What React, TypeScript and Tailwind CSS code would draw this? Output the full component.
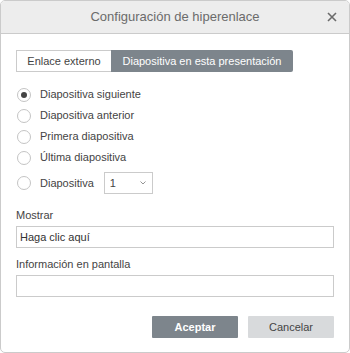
import React from "react";

const options = [
  "Diapositiva siguiente",
  "Diapositiva anterior",
  "Primera diapositiva",
  "Última diapositiva",
];

const Radio = ({ checked }: { checked?: boolean }) => (
  <span className="w-[14px] h-[14px] rounded-full border border-[#c4c4c4] bg-white flex items-center justify-center shrink-0">
    {checked && <span className="w-[6px] h-[6px] rounded-full bg-[#444]" />}
  </span>
);

const App = () => {
  return (
    <div
      className="w-[350px] h-[353px] bg-white border border-[#cbcbcb] rounded-[5px] overflow-hidden flex flex-col text-[11px] text-[#444]"
      style={{ fontFamily: '"Liberation Sans", Arial, sans-serif' }}
    >
      {/* Header */}
      <div className="h-[33px] shrink-0 bg-[#ededed] border-b border-[#cbcbcb] relative flex items-center justify-center">
        <span className="text-[13px] text-[#6b6b6b]">Configuración de hiperenlace</span>
        <svg className="absolute right-[12px] top-[11px]" width="10" height="10" viewBox="0 0 10 10">
          <path d="M1 1L9 9M9 1L1 9" stroke="#6b6b6b" strokeWidth="1.6" />
        </svg>
      </div>

      <div className="px-[15px] pt-[16px] flex flex-col">
        {/* Tabs */}
        <div className="flex h-[22px]">
          <div className="w-[95px] border border-[#cbcbcb] border-r-0 flex items-center justify-center text-[#444]">
            Enlace externo
          </div>
          <div className="w-[182px] bg-[#7d858c] rounded-r-[2px] flex items-center justify-center text-white">
            Diapositiva en esta presentación
          </div>
        </div>

        {/* Radios */}
        <div className="flex flex-col mt-[12px] pl-[1px]">
          {options.map((o, i) => (
            <div key={o} className="flex items-center h-[21px] gap-[9px]">
              <Radio checked={i === 0} />
              <span>{o}</span>
            </div>
          ))}
          <div className="flex items-center h-[22px] gap-[9px] mt-[4px]">
            <Radio />
            <span>Diapositiva</span>
            <div className="ml-[1px] w-[49px] h-[22px] border border-[#cbcbcb] flex items-center justify-between pl-[5px] pr-[6px]">
              <span>1</span>
              <svg width="6" height="4" viewBox="0 0 6 4">
                <path d="M0.5 0.5L3 3L5.5 0.5" stroke="#777" strokeWidth="0.8" fill="none" />
              </svg>
            </div>
          </div>
        </div>

        {/* Fields */}
        <div className="mt-[14px] flex flex-col">
          <span className="leading-[14px]">Mostrar</span>
          <div className="mt-[4px] h-[22px] border border-[#cbcbcb] flex items-center px-[3px] text-[#333]">
            Haga clic aquí
          </div>
          <span className="mt-[9px] leading-[14px]">Información en pantalla</span>
          <div className="mt-[4px] h-[22px] border border-[#cbcbcb]" />
        </div>

        {/* Buttons */}
        <div className="flex justify-end gap-[10px] mt-[19px]">
          <button className="w-[86px] h-[22px] bg-[#7d858c] text-white font-bold text-[11px] rounded-[1px]">
            Aceptar
          </button>
          <button className="w-[86px] h-[22px] bg-[#d8dadc] text-[#444] text-[11px] rounded-[1px]">
            Cancelar
          </button>
        </div>
      </div>
    </div>
  );
};

export default App;
